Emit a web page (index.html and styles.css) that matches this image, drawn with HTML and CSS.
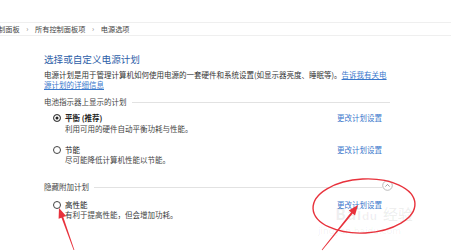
FILE: index.html
```html
<!DOCTYPE html>
<html lang="zh-CN">
  <head>
    <meta charset="UTF-8" />
    <meta name="viewport" content="width=device-width, initial-scale=1.0" />
    <title>电源选项</title>
    <link rel="stylesheet" href="styles.css">
  </head>
  <body>
    <div class="crumbs">
      <span class="cut">制面板</span>
      <span class="sep">›</span>
      <span>所有控制面板项</span>
      <span class="sep">›</span>
      <span>电源选项</span>
    </div>

    <div class="panel">
      <h1 class="title">选择或自定义电源计划</h1>
      <p class="intro">电源计划是用于管理计算机如何使用电源的一套硬件和系统设置(如显示器亮度、睡眠等)。<a href="#">告诉我有关电源计划的详细信息</a></p>

      <div class="group">
        <span>电池指示器上显示的计划</span>
        <span class="rule"></span>
      </div>

      <div class="plan first">
        <div>
          <label class="radio-row"><span class="radio on"></span><b>平衡 (推荐)</b></label>
          <p class="note">利用可用的硬件自动平衡功耗与性能。</p>
        </div>
        <a href="#" class="change">更改计划设置</a>
      </div>

      <div class="plan second">
        <div>
          <label class="radio-row"><span class="radio"></span>节能</label>
          <p class="note">尽可能降低计算机性能以节能。</p>
        </div>
        <a href="#" class="change">更改计划设置</a>
      </div>

      <div class="group hidden-plans">
        <span>隐藏附加计划</span>
        <span class="rule"></span>
        <span class="toggle">
          <svg width="11" height="11" viewBox="0 0 11 11"><circle cx="5.5" cy="5.5" r="4.8" fill="#fff" stroke="#aaa" stroke-width="0.8"/><path d="M3.4 6.6 L5.5 4.4 L7.6 6.6" fill="none" stroke="#888" stroke-width="0.8"/></svg>
        </span>
      </div>

      <div class="plan third">
        <div>
          <label class="radio-row"><span class="radio"></span>高性能</label>
          <p class="note">有利于提高性能，但会增加功耗。</p>
        </div>
        <a href="#" class="change">更改计划设置</a>
      </div>
    </div>

    <!-- baidu watermark -->
    <div class="mark">
      <span class="mark-logo">Bai<i>du</i> 经验</span>
      <span class="mark-url">jingyan.baidu.com</span>
    </div>

    <!-- red annotations drawn over the screenshot -->
    <svg class="notes" width="451" height="252" viewBox="0 0 451 252">
      <ellipse cx="364" cy="206" rx="51" ry="27" transform="rotate(-3 364 206)" fill="none" stroke="#e8323c" stroke-width="1.4"/>
      <polygon fill="#e8323c" points="59,208 66.1,216.1 63.3,217.1 74.4,249.9 73.6,250.1 61.5,217.7 58.6,218.8"/>
      <polygon fill="#e8323c" points="358,205 355,215.4 352.7,213.5 322.3,250.2 321.7,249.8 351.1,212.3 348.7,210.4"/>
    </svg>
  </body>
</html>
```

FILE: styles.css
```css
body {
  margin: 0;
  font-family: "Noto Sans CJK SC", "Noto Sans", sans-serif;
  font-size: 7.5px;
  color: #333;
  background: #fff;
  width: 451px;
  height: 252px;
  overflow: hidden;
  position: relative;
}
a {
  color: #3a78cc;
  text-decoration: none;
}
.crumbs {
  margin-top: 22px;
  height: 12px;
  line-height: 12px;
  border-top: 1px solid #efefef;
  border-bottom: 1px solid #efefef;
  color: #444;
  white-space: nowrap;
  font-size: 7.2px;
}
.crumbs .cut {
  margin-left: -2px;
}
.crumbs .sep {
  color: #888;
  margin: 0 5px;
}
.panel {
  padding-left: 44px;
  width: 346px;
}
.title {
  margin: 17px 0 0;
  font-size: 9.6px;
  font-weight: normal;
  line-height: 12px;
  color: #2d5ea8;
}
.intro {
  margin: 5px 0 0;
  line-height: 9.5px;
  color: #333;
}
.intro a {
  text-decoration: underline;
}
.group {
  display: flex;
  align-items: center;
  margin-top: 8px;
  line-height: 10px;
  color: #444;
}
.group .rule {
  flex: 1;
  height: 1px;
  background: #e2e2e2;
  margin-left: 5px;
}
.hidden-plans {
  margin-top: 18px;
}
.toggle {
  display: flex;
  margin-top: -4px;
  margin-right: -3px;
}
.plan {
  display: grid;
  grid-template-columns: 1fr 53px;
}
.plan.first {
  margin-top: 6px;
}
.plan.second {
  margin-top: 12px;
}
.plan.third {
  margin-top: 8px;
}
.radio-row {
  display: flex;
  align-items: center;
  gap: 4px;
  padding-left: 9px;
  line-height: 10px;
  color: #222;
}
.radio {
  box-sizing: border-box;
  width: 8px;
  height: 8px;
  border: 1px solid #444;
  border-radius: 50%;
}
.radio.on {
  background: #222;
  box-shadow: inset 0 0 0 1.5px #fff;
}
.note {
  margin: 0;
  padding-left: 21px;
  line-height: 9px;
  color: #444;
}
.plan.first .note {
  margin-top: 1px;
}
.change {
  line-height: 10px;
  white-space: nowrap;
}
.mark {
  position: absolute;
  left: 318px;
  top: 206px;
  display: flex;
  flex-direction: column;
  color: rgba(0, 0, 0, 0.06);
  font-family: "DejaVu Sans", sans-serif;
}
.mark-logo {
  margin-left: 17px;
  font-size: 15px;
  font-weight: bold;
  line-height: 18px;
}
.mark-logo i {
  font-style: normal;
  font-size: 11px;
}
.mark-url {
  font-size: 9px;
  line-height: 10px;
}
.notes {
  position: absolute;
  left: 0;
  top: 0;
}
```
